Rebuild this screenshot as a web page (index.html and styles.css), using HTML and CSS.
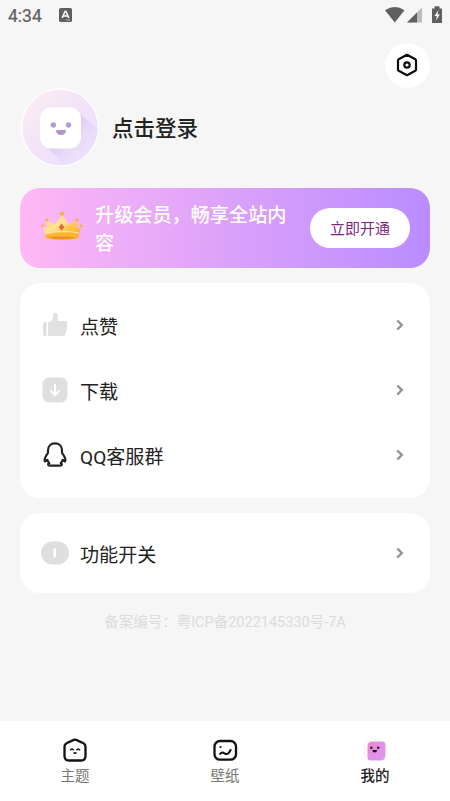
FILE: index.html
```html
<!DOCTYPE html>
<html lang="zh-CN">
<head>
<meta charset="utf-8">
<title>我的</title>
<link rel="stylesheet" href="styles.css">
</head>
<body>
<div class="app">
  <header class="status">
    <span class="time">4:34</span>
    <svg class="badge" width="13" height="14" viewBox="0 0 13 14"><rect width="13" height="14" rx="1.5" fill="#606060"/><path d="M3.2 10 6 3.5h1L9.8 10M4.6 8h4" fill="none" stroke="#fff" stroke-width="1.6"/><path d="M7 12h4" stroke="#ccc" stroke-width=".8"/></svg>
    <svg class="signals" width="58" height="18" viewBox="0 0 58 18"><path d="M0 4.3Q10 -2.5 19.5 4.3L9.8 16.5Z" fill="#606060"/><path d="M22 16.5 37 1.5v15Z" fill="#bcbcbc"/><path d="M22 16.5 32 6.5v10Z" fill="#606060"/><path d="M47 2.500h2.500V.300h5V2.500h2.500v14.500H47Z" fill="#606060"/><path d="m53.500 4-4 6h2.300l-.8 4.500 3.800-6h-2.300Z" fill="#fff"/></svg>
  </header>
  <div class="toolbar">
    <div class="settings"><svg width="24" height="26" viewBox="0 0 24 26"><path d="M12 2.800 20.300 7.300Q21 7.700 21 8.500v9q0 .8-.7 1.200L12 23.200 3.700 18.700Q3 18.300 3 17.500v-9q0-.8.7-1.200Z" fill="none" stroke="#0c0c0c" stroke-width="2.200" stroke-linejoin="round"/><circle cx="12" cy="13" r="2.700" fill="none" stroke="#0c0c0c" stroke-width="2.200"/></svg></div>
  </div>
  <section class="profile">
    <svg class="avatar" width="80" height="80" viewBox="0 0 80 80">
      <defs>
        <linearGradient id="face" x1="0" y1="0" x2="1" y2="1"><stop offset="0" stop-color="#fdeef1"/><stop offset=".5" stop-color="#f2e3f9"/><stop offset="1" stop-color="#eadffd"/></linearGradient>
        <linearGradient id="shade" gradientUnits="userSpaceOnUse" x1="42" y1="42" x2="66" y2="66"><stop offset="0" stop-color="#d6c6ec"/><stop offset="1" stop-color="#eadffb" stop-opacity=".2"/></linearGradient>
        <clipPath id="disc"><circle cx="40" cy="39.500" r="38"/></clipPath>
      </defs>
      <circle cx="40" cy="39.500" r="38.500" fill="url(#face)" stroke="#fffcff" stroke-width="1.500"/>
      <path d="M57 24 90 51V90H57L27 59Z" fill="url(#shade)" clip-path="url(#disc)"/>
      <rect x="20" y="19.500" width="41" height="41" rx="11" fill="#fff"/>
      <circle cx="33.300" cy="37" r="2.700" fill="#b79bcd"/><circle cx="48.500" cy="37" r="2.700" fill="#b79bcd"/>
      <path d="M36.300 42h9.400c.5 0 .5 5-4.700 5s-5.200-5-4.700-5Z" fill="#b195c9"/>
    </svg>
    <h1>点击登录</h1>
  </section>
  <section class="vip">
    <svg class="crown" width="42" height="30" viewBox="0 0 42 30">
      <defs><linearGradient id="gold" x1="0" y1="0" x2="1" y2="1"><stop offset="0" stop-color="#ffd66e"/><stop offset=".4" stop-color="#ffe494"/><stop offset=".6" stop-color="#ffc64d"/><stop offset="1" stop-color="#f6a52a"/></linearGradient></defs>
      <path d="M2 15 5.500 18 6 9.500 14 13.500 21 4 28 13.500 36 9.500 36.500 18 40 15 37.500 27Q21 31 4.500 27Z" fill="url(#gold)"/>
      <path d="M4 23.500Q21 20 38 23.500L37.500 27Q21 31 4.500 27Z" fill="#ffb235"/><path d="M6 26.500Q21 24.500 36 26.500Q21 29.500 6 26.500Z" fill="#e99021"/>
      <path d="M4 22Q21 18.500 38 22" fill="none" stroke="#ffe69a"/>
      <g fill="#f5b13c"><circle cx="21" cy="2.500" r="2"/><circle cx="6" cy="9" r="1.600"/><circle cx="36" cy="9" r="1.600"/><circle cx="1.700" cy="14.700" r="1.200"/><circle cx="40.300" cy="14.700" r="1.200"/></g>
      <path d="m20.500 12.500 2.700 3.700-2.700 3.600-2.700-3.600Z" fill="#df6934"/>
    </svg>
    <p>升级会员，畅享全站内容</p>
    <button>立即开通</button>
  </section>
  <section class="card">
    <div class="row"><svg class="icon" width="30" height="30" viewBox="0 0 30 30" fill="#e1e1e1"><path d="M6.500 12v14H5q-2 0-2-2V14q0-2 2-2ZM8 12h2q3-1.500 3-5V5c0-3 4.800-3 4.800 0v6H25q2.700 0 2.400 2.700l-1.600 9.800q-.5 2.500-3 2.500H8Z"/></svg><span>点赞</span><svg class="chev" width="8" height="12" viewBox="0 0 8 12"><path d="m1.300 1.500 4.500 4.500-4.500 4.500"/></svg></div>
    <div class="row"><svg class="icon" width="30" height="30" viewBox="0 0 30 30"><rect x="2.500" y="2.500" width="25" height="25" rx="6.500" fill="#dfdfdf"/><path d="M15 9v11m-4.500-4.500L15 20l4.500-4.500" fill="none" stroke="#fff" stroke-width="2"/></svg><span>下载</span><svg class="chev" width="8" height="12" viewBox="0 0 8 12"><path d="m1.300 1.500 4.500 4.500-4.500 4.500"/></svg></div>
    <div class="row"><svg class="icon" width="30" height="30" viewBox="0 0 30 30"><path d="M15 3.300c-4.500 0-7 3.200-7 7v2.500c-2.200 3-4 6.200-3.200 8.300.8.800 2-.8 2.500-1.300q.5 2 2 3.200c-2 1-1.300 2.700.5 2.700h10.400c1.800 0 2.500-1.700.5-2.700q1.500-1.200 2-3.200c.5.500 1.700 2.100 2.500 1.300.8-2.100-1-5.300-3.200-8.300v-2.500c0-3.800-2.500-7-7-7Z" fill="none" stroke="#22221e" stroke-width="2.200" stroke-linejoin="round"/></svg><span>QQ客服群</span><svg class="chev" width="8" height="12" viewBox="0 0 8 12"><path d="m1.300 1.500 4.500 4.500-4.500 4.500"/></svg></div>
  </section>
  <section class="card single">
    <div class="row"><svg class="icon" width="30" height="30" viewBox="0 0 30 30"><rect x="1" y="3.500" width="28" height="23" rx="11.500" fill="#dfdfdf"/><path d="M14.700 10.500v9" stroke="#fff" stroke-width="2.600"/></svg><span>功能开关</span><svg class="chev" width="8" height="12" viewBox="0 0 8 12"><path d="m1.300 1.500 4.500 4.500-4.500 4.500"/></svg></div>
  </section>
  <p class="record">备案编号：粤ICP备2022145330号-7A</p>
  <nav>
    <a><svg width="26" height="26" viewBox="0 0 26 26" fill="none" stroke="#111" stroke-width="2.300"><path d="M11.800 2.900 4.500 6.200Q2.500 7.200 2.500 9.500V19q0 4.500 4.500 4.500h12q4.500 0 4.500-4.500V9.500q0-2.300-2-3.300l-7.300-3.300q-1.200-.5-2.400 0Z"/><path d="M8.300 13.300q1.700-2.600 3.400 0m2.800 0q1.700-2.600 3.400 0M11.500 15.500q1.500 1.500 3 0" stroke-width="1.600"/></svg><span>主题</span></a>
    <a><svg width="26" height="26" viewBox="0 0 26 26" fill="none" stroke="#111" stroke-width="2.300"><rect x="2.500" y="4" width="21.500" height="18.700" rx="5.500"/><path d="M7.500 17.500c2-2.500 3.500-2.300 5-1.200 3 2 4.700-.3 6.500-4" stroke-width="2"/><circle cx="8.500" cy="10" r="1.100" fill="#111" stroke="none"/></svg><span>壁纸</span></a>
    <a class="active"><svg width="26" height="26" viewBox="0 0 26 26"><defs><linearGradient id="me" x1="0" y1="0" x2="1" y2="1"><stop stop-color="#ea88ce"/><stop offset="1" stop-color="#db9af8"/></linearGradient></defs><path d="M2 20V9q0-6 6-6h11" fill="none" stroke="#eee" stroke-width=".7"/><path d="M10.500 4.500h10Q23.500 4.500 23.500 8v10q0 5.500-5.500 5.500H8.500q-3 0-3-3v-11q0-5 5-5Z" fill="url(#me)"/><circle cx="9.300" cy="10.800" r="1.300" fill="#4b183b"/><circle cx="16.200" cy="10.800" r="1.300" fill="#4b183b"/><path d="M10.200 13h5q-.5 2.500-2.500 2.500T10.200 13Z" fill="#271020"/></svg><span>我的</span></a>
  </nav>
</div>
</body>
</html>
```
FILE: styles.css
```css
* { box-sizing: border-box; margin: 0; padding: 0; }
body { background: #f6f6f6; font-family: Roboto, "Noto Sans CJK SC", sans-serif; color: #22221e; }
.app { width: 450px; height: 801px; display: flex; flex-direction: column; overflow: hidden; }
.status { height: 32px; display: flex; align-items: center; padding: 0 7px 2px 8px; color: #606060; }
.time { font-size: 17.5px; font-weight: 400; -webkit-text-stroke: .2px; width: 51px; padding-top: 2px; }
.signals { margin-left: auto; }
.toolbar { height: 56px; padding: 11px 20px 0; display: flex; justify-content: flex-end; }
.settings { width: 45px; height: 45px; padding: 0 1px 1px 0; border-radius: 50%; background: #fff; display: flex; align-items: center; justify-content: center; }
.profile { height: 100px; padding-left: 20px; display: flex; align-items: flex-start; gap: 12px; }
.profile h1 { font-size: 21.5px; line-height: 82px; font-weight: 500; }
.avatar { display: block; }
.vip { height: 80px; margin: 0 20px; border-radius: 20px; padding: 0 20px 0 21px; display: flex; align-items: center; background: linear-gradient(90deg, #ffb8f5, #b98cff); }
.crown { margin-top: -5px; }
.vip p { width: 200px; margin-left: 12px; padding-top: 3px; font-size: 19.15px; line-height: 28px; font-weight: 500; color: #fff; }
.vip button { margin-left: auto; width: 100px; height: 40px; padding-bottom: 2px; border: 0; border-radius: 20px; background: #fff; color: #842380; font: inherit; font-size: 15px; }
.card { margin: 15px 20px 0; height: 215px; padding: 9.5px 25px 10px 20px; border-radius: 20px; background: #fff; }
.card.single { height: 80px; padding-top: 7.5px; }
.row { height: 65px; display: flex; align-items: center; font-size: 19.1px; }
.row span { margin-left: 10px; padding-top: 1px; }
.chev { margin-left: auto; margin-right: 1px; fill: none; stroke: #929292; stroke-width: 2.4; }
.record { margin-top: 20px; text-align: center; font-size: 14.5px; line-height: 20px; color: #dcdcdc; }
nav { margin-top: auto; height: 80px; background: #fff; display: flex; }
nav a { flex: 1; display: flex; flex-direction: column; align-items: center; padding-top: 16px; font-size: 14.5px; line-height: 22px; color: #77776f; }
nav span { margin-top: 3px; }
nav .active { color: #22221e; font-weight: 500; }
```
